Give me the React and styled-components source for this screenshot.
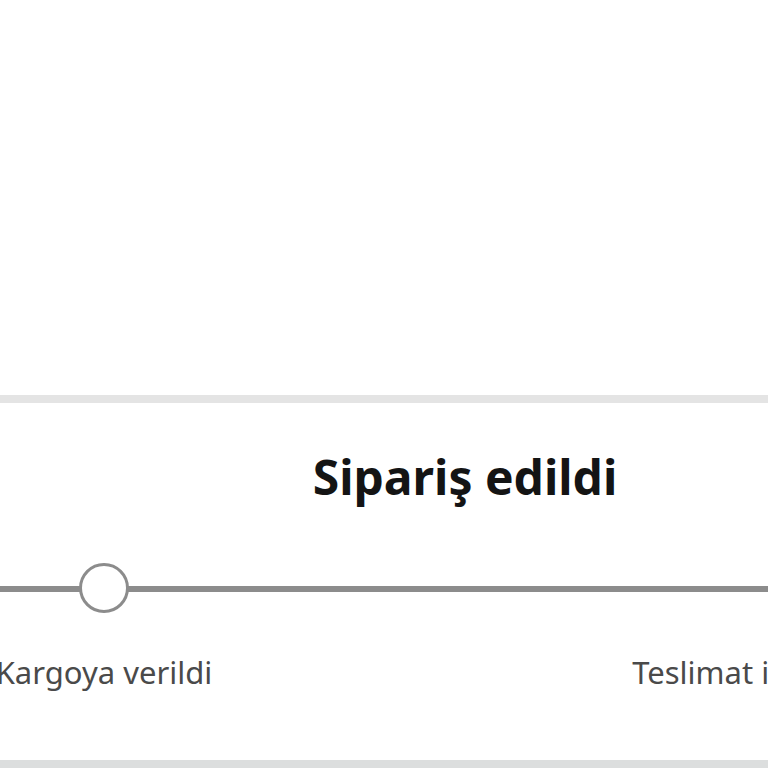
import React from "react";
import styled, { createGlobalStyle } from "styled-components";

const GlobalStyle = createGlobalStyle`
  html, body {
    margin: 0;
    padding: 0;
    background: #fff;
    overflow: hidden;
  }
  body {
    font-family: "Noto Sans", "Open Sans", sans-serif;
  }
`;

const Page = styled.div`
  width: 768px;
  height: 768px;
  overflow: hidden;
  display: flex;
  flex-direction: column;
`;

const Blank = styled.div`
  height: 395px;
  flex: none;
`;

const Card = styled.section`
  flex: none;
  height: 357px;
  border-top: 8px solid #e4e4e4;
  border-bottom: 8px solid #dcdede;
  background: #fff;
  display: flex;
  flex-direction: column;
`;

const Title = styled.h2`
  margin: 44px 0 0;
  padding-left: 162px;
  text-align: center;
  font-size: 48px;
  line-height: 60px;
  font-weight: 700;
  color: #141414;
`;

const Steps = styled.div`
  display: flex;
  width: max-content;
  margin-left: -241px;
  margin-top: 56px;
`;

const Step = styled.div`
  width: 690px;
  display: flex;
  flex-direction: column;
  align-items: center;
`;

// gray track runs behind every dot
const Marker = styled.div`
  position: relative;
  width: 100%;
  height: 50px;
  display: flex;
  justify-content: center;
  align-items: center;

  &::before {
    content: "";
    position: absolute;
    left: 0;
    right: 0;
    top: 50%;
    height: 6px;
    margin-top: -2px;
    background: #8c8c8c;
  }
`;

const Dot = styled.span`
  position: relative;
  z-index: 1;
  box-sizing: border-box;
  width: 50px;
  height: 50px;
  border-radius: 50%;
  border: 3px solid #8c8c8c;
  background: #fff;
`;

const Label = styled.div`
  margin-top: 41px;
  margin-right: ${(p) => (p.$last ? "10px" : "0")};
  font-size: 31px;
  line-height: 36px;
  color: #4a4a4a;
  white-space: nowrap;
`;

const steps = [
  { label: "Kargoya verildi" },
  { label: "Teslimat için yola çıktı" },
];

export default function App() {
  return (
    <Page>
      <GlobalStyle />
      <Blank />
      <Card>
        <Title>Sipariş edildi</Title>
        <Steps>
          {steps.map((s, i) => (
            <Step key={s.label}>
              <Marker>
                <Dot />
              </Marker>
              <Label $last={i === steps.length - 1}>{s.label}</Label>
            </Step>
          ))}
        </Steps>
      </Card>
    </Page>
  );
}
